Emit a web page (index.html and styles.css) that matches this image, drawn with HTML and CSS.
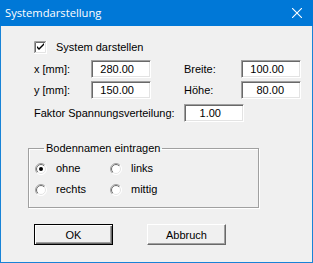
FILE: index.html
```html
<!DOCTYPE html>
<html>
<head>
<meta charset="utf-8">
<link rel="stylesheet" href="styles.css">
</head>
<body>
<div class="window">
  <div class="titlebar">
    <span class="title">Systemdarstellung</span>
    <svg class="close" width="10" height="10" viewBox="0 0 10 10"><path d="M0 0 L10 10 M10 0 L0 10" stroke="#fff" stroke-width="1.1" fill="none"/></svg>
  </div>
  <div class="content">
    <div class="check-row">
      <svg class="checkbox" width="13" height="13" viewBox="0 0 13 13">
        <rect x="0" y="0" width="13" height="13" fill="#fff"/>
        <path d="M0.5 12 V0.5 H12" stroke="#a0a0a0" fill="none"/>
        <path d="M1.5 11 V1.5 H11" stroke="#696969" fill="none"/>
        <path d="M0 12.5 H12.5 V0" stroke="#ffffff" fill="none"/>
        <path d="M1 11.5 H11.5 V1" stroke="#e3e3e3" fill="none"/>
        <path d="M3 5 L3 7 L5 9 L10 4 L10 2 L5 7 Z" fill="#000"/>
      </svg>
      <span>System darstellen</span>
    </div>
    <div class="fields">
      <span class="lbl">x [mm]:</span><span class="input">280.00</span>
      <span class="lbl">Breite:</span><span class="input">100.00</span>
      <span class="lbl">y [mm]:</span><span class="input">150.00</span>
      <span class="lbl">Höhe:</span><span class="input">80.00</span>
    </div>
    <div class="faktor">
      <span class="lbl faktor-lbl">Faktor Spannungsverteilung:</span><span class="input input-narrow">1.00</span>
    </div>
    <fieldset class="group">
      <legend>Bodennamen eintragen</legend>
      <div class="radios">
        <span class="radio-item">
          <svg class="radio" width="12" height="12" viewBox="0 0 12 12">
            <defs>
              <linearGradient id="gOuter" x1="0" y1="0" x2="1" y2="1"><stop offset="0.5" stop-color="#a0a0a0"/><stop offset="0.5" stop-color="#ffffff"/></linearGradient>
              <linearGradient id="gInner" x1="0" y1="0" x2="1" y2="1"><stop offset="0.5" stop-color="#696969"/><stop offset="0.5" stop-color="#e3e3e3"/></linearGradient>
            </defs>
            <circle cx="6" cy="6" r="5.5" fill="#fff" stroke="url(#gOuter)"/>
            <circle cx="6" cy="6" r="4.5" fill="#fff" stroke="url(#gInner)"/>
            <circle cx="6" cy="6" r="2" fill="#000"/>
          </svg>
          <span>ohne</span>
        </span>
        <span class="radio-item">
          <svg class="radio" width="12" height="12" viewBox="0 0 12 12">
            <circle cx="6" cy="6" r="5.5" fill="#fff" stroke="url(#gOuter)"/>
            <circle cx="6" cy="6" r="4.5" fill="#fff" stroke="url(#gInner)"/>
          </svg>
          <span>links</span>
        </span>
        <span class="radio-item">
          <svg class="radio" width="12" height="12" viewBox="0 0 12 12">
            <circle cx="6" cy="6" r="5.5" fill="#fff" stroke="url(#gOuter)"/>
            <circle cx="6" cy="6" r="4.5" fill="#fff" stroke="url(#gInner)"/>
          </svg>
          <span>rechts</span>
        </span>
        <span class="radio-item">
          <svg class="radio" width="12" height="12" viewBox="0 0 12 12">
            <circle cx="6" cy="6" r="5.5" fill="#fff" stroke="url(#gOuter)"/>
            <circle cx="6" cy="6" r="4.5" fill="#fff" stroke="url(#gInner)"/>
          </svg>
          <span>mittig</span>
        </span>
      </div>
    </fieldset>
    <div class="buttons">
      <span class="btn btn-default">OK</span>
      <span class="btn">Abbruch</span>
    </div>
  </div>
</div>
</body>
</html>
```
FILE: styles.css
```css
html, body {
  margin: 0;
  padding: 0;
}
body {
  width: 313px;
  height: 263px;
  overflow: hidden;
  font-family: "Liberation Sans", Arial, sans-serif;
  font-size: 11px;
  color: #000;
  background: #f0f0f0;
}
.window {
  box-sizing: border-box;
  width: 313px;
  height: 263px;
  border: 1px solid #1883d7;
  border-top: 0;
  background: #f0f0f0;
  display: flex;
  flex-direction: column;
}
.titlebar {
  flex: none;
  height: 26px;
  margin: 0 -1px;
  padding: 0 11px 0 5px;
  background: #0078d7;
  color: #fff;
  display: flex;
  align-items: center;
  justify-content: space-between;
  font-family: "Open Sans", "Noto Sans", sans-serif;
  font-size: 11.2px;
}
.title {
  line-height: 16px;
  margin-top: -1px;
}
.close {
  display: block;
}
.content {
  padding: 15px 0 0 27px;
}
.check-row {
  margin-left: 6px;
  height: 13px;
  display: flex;
  align-items: center;
  gap: 9px;
  line-height: 13px;
}
.checkbox, .radio {
  display: block;
  flex: none;
}
.fields {
  margin: 6px 0 0 6px;
  display: grid;
  grid-template-columns: 57px 93px 57px 60px;
  grid-auto-rows: 18px;
  row-gap: 3px;
}
.lbl {
  align-self: center;
  line-height: 13px;
  white-space: nowrap;
}
.input {
  box-sizing: border-box;
  width: 60px;
  height: 18px;
  background: #fff;
  border: 1px solid;
  border-color: #a0a0a0 #fff #fff #a0a0a0;
  box-shadow: inset 1px 1px #696969, inset -1px -1px #e3e3e3;
  text-align: right;
  padding-right: 16px;
  line-height: 16px;
}
.input-narrow {
  padding-right: 22px;
}
.faktor {
  margin: 5px 0 0 6px;
  height: 18px;
  display: flex;
}
.faktor-lbl {
  width: 150px;
}
.group {
  box-sizing: border-box;
  width: 231px;
  margin: 20px 0 0 0;
  padding: 7px 0 11px 6px;
  border: 1px solid #a0a0a0;
  box-shadow: inset 1px 1px #fff, 1px 1px #fff;
  min-width: 0;
}
.group legend {
  margin-left: 9px;
  padding: 0 2px;
  line-height: 13px;
}
.radios {
  display: grid;
  grid-template-columns: 75px auto;
  grid-auto-rows: 13px;
  row-gap: 8px;
}
.radio-item {
  display: flex;
  align-items: center;
  gap: 9px;
  line-height: 13px;
}
.buttons {
  margin: 16px 0 0 6px;
  display: flex;
  gap: 34px;
}
.btn {
  box-sizing: border-box;
  width: 79px;
  height: 21px;
  display: flex;
  align-items: center;
  justify-content: center;
  background: #f0f0f0;
  border: 1px solid;
  border-color: #fff #696969 #696969 #fff;
  box-shadow: inset -1px -1px #a0a0a0;
}
.btn-default {
  border-color: #000;
  box-shadow: inset 1px 1px #fff, inset -1px -1px #696969, inset -2px -2px #a0a0a0;
}
```
